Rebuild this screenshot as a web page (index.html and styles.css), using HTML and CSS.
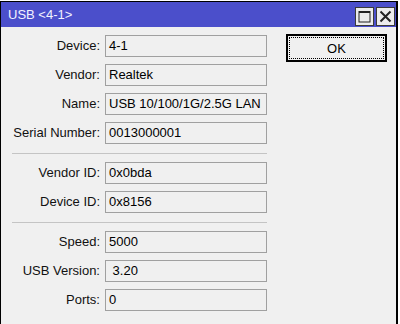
FILE: index.html
```html
<!DOCTYPE html>
<html>
<head>
<meta charset="utf-8">
<title>USB &lt;4-1&gt;</title>
<link rel="stylesheet" href="styles.css">
</head>
<body>
<div class="window">
  <div class="titlebar">
    <span class="title">USB &lt;4-1&gt;</span>
    <div class="tbuttons">
      <span class="tbtn">
        <svg width="13" height="13" viewBox="0 0 13 13"><rect x="1" y="1.5" width="11" height="10.5" fill="none" stroke="#222" stroke-width="1"/><rect x="1" y="1" width="11" height="2" fill="#222"/></svg>
      </span>
      <span class="tbtn">
        <svg width="13" height="13" viewBox="0 0 13 13"><path d="M1.5 1.5 L11.5 11.5 M11.5 1.5 L1.5 11.5" stroke="#222" stroke-width="2" fill="none"/></svg>
      </span>
    </div>
  </div>
  <div class="content">
    <div class="form">
      <div class="group">
        <label class="lbl">Device:</label><div class="field">4-1</div>
        <label class="lbl">Vendor:</label><div class="field">Realtek</div>
        <label class="lbl">Name:</label><div class="field">USB 10/100/1G/2.5G LAN</div>
        <label class="lbl">Serial Number:</label><div class="field">0013000001</div>
      </div>
      <div class="sep"></div>
      <div class="group">
        <label class="lbl">Vendor ID:</label><div class="field">0x0bda</div>
        <label class="lbl">Device ID:</label><div class="field">0x8156</div>
      </div>
      <div class="sep"></div>
      <div class="group">
        <label class="lbl">Speed:</label><div class="field">5000</div>
        <label class="lbl">USB Version:</label><div class="field pre"> 3.20</div>
        <label class="lbl">Ports:</label><div class="field">0</div>
      </div>
    </div>
    <div class="actions">
      <button class="btn"><span class="focus">OK</span></button>
    </div>
  </div>
</div>
</body>
</html>
```
FILE: styles.css
```css
html, body {
  margin: 0;
  padding: 0;
  background: #ffffff;
  overflow: hidden;
}
body {
  font-family: "Liberation Sans", Arial, sans-serif;
  font-size: 13px;
  color: #000;
}
.window {
  margin-top: 1px;
  width: 398px;
  height: 323px;
  box-sizing: border-box;
  border: 1px solid #000;
  border-right-width: 2px;
  border-bottom: 0;
  background: #f0f0f0;
}
.titlebar {
  height: 25px;
  background: #4b4fcb;
  display: flex;
  align-items: flex-start;
  justify-content: space-between;
}
.title {
  color: #f2f2ff;
  font-size: 13px;
  line-height: 25px;
  padding-left: 7px;
}
.tbuttons {
  display: flex;
  gap: 2px;
  padding-top: 5px;
  padding-right: 1px;
}
.tbtn {
  width: 19px;
  height: 19px;
  box-sizing: border-box;
  border: 1px solid #3a3a3a;
  background: #ececec;
  display: flex;
  align-items: center;
  justify-content: center;
}
.content {
  display: flex;
  align-items: flex-start;
  padding-top: 7px;
}
.form {
  padding-top: 1px;
  width: 266px;
}
.group {
  display: grid;
  grid-template-columns: 99px 162px;
  column-gap: 5px;
  row-gap: 7px;
}
.lbl {
  text-align: right;
  line-height: 22px;
  white-space: nowrap;
  color: #111;
}
.field {
  height: 22px;
  box-sizing: border-box;
  border: 1px solid #a0a0a0;
  padding-left: 3px;
  line-height: 20px;
  white-space: nowrap;
  overflow: hidden;
  color: #000;
}
.pre {
  white-space: pre;
}
.sep {
  height: 1px;
  background: #c4c4c4;
  margin: 9px 0 8px 11px;
  width: 255px;
}
.actions {
  margin-left: 19px;
}
.btn {
  width: 101px;
  height: 28px;
  box-sizing: border-box;
  border: 1px solid #000;
  outline: 1px solid #000;
  outline-offset: -2px;
  background: #f0f0f0;
  padding: 2px;
  margin: 0;
  font-family: "Liberation Sans", Arial, sans-serif;
  font-size: 13px;
  color: #000;
  display: flex;
}
.focus {
  flex: 1;
  border: 1px dotted #000;
  display: flex;
  align-items: center;
  justify-content: center;
}
```
